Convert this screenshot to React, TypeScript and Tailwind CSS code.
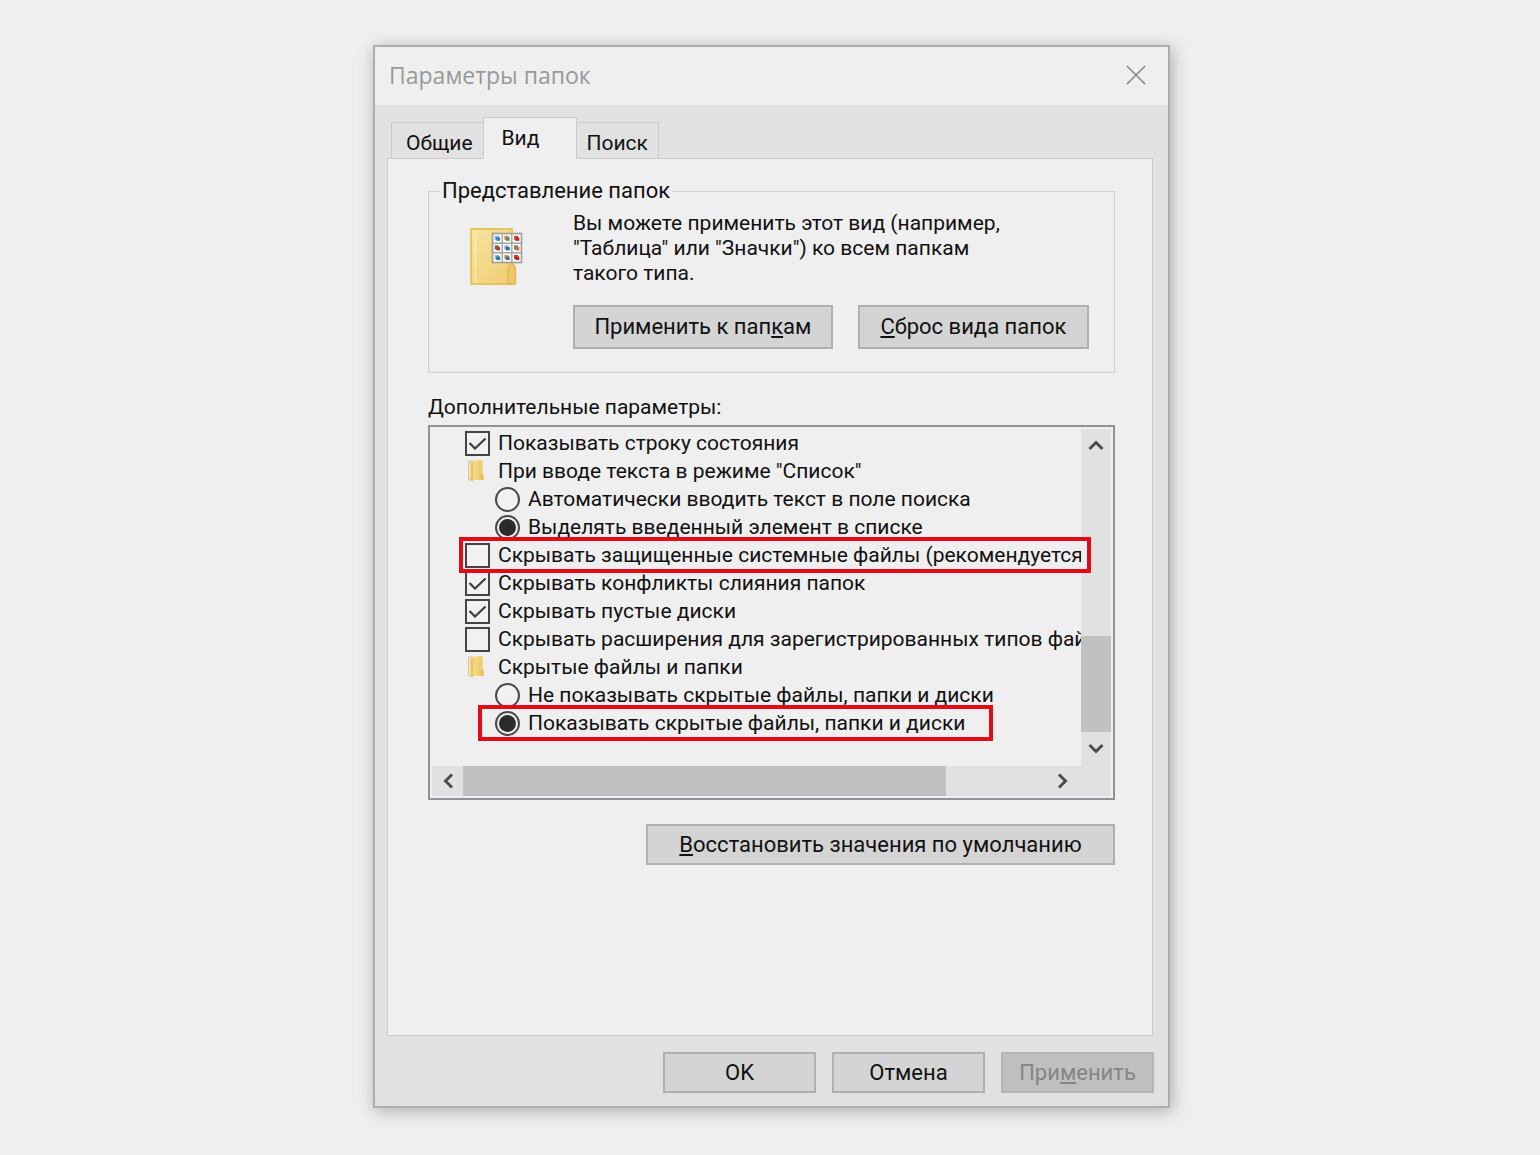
import { useState } from "react";
import type { ReactNode } from "react";

const buttonBase =
  "flex items-center justify-center whitespace-nowrap border-2 text-[22px] leading-6";
const buttonEnabled = "border-[#b0b0b0] bg-[#d4d4d4] text-[#111]";

function Check() {
  return (
    <svg viewBox="0 0 25 25" className="pointer-events-none size-[25px] [grid-area:1/1]" aria-hidden="true">
      <path d="M4.500 12 10 17.500 20.500 7.500" fill="none" stroke="#3f3f3f" strokeWidth="2.200" />
    </svg>
  );
}

function SmallFolder() {
  return (
    <svg viewBox="0 0 16 22" className="h-[22px] w-4" aria-hidden="true">
      <path d="M.5 1h4v19h-4z" fill="#f3e6bd" stroke="#d3c7a6" strokeWidth="1" />
      <path d="M4 .5h10.500V14l1 .5v5.500H4z" fill="#f4d682" />
      <path d="M10 .5h4.500V14l1 .5v5.500H10z" fill="#efcd72" />
      <path d="M2.500 1 5 3v19l-2.500-2z" fill="#e9c766" />
      <path d="M12.500 14h3v6h-3z" fill="#e6c160" />
    </svg>
  );
}

const cells = [
  ["#3d7fb5", "#6fb0dd"],
  ["#4e9a5c", "#e0803c"],
  ["#b3261a", "#d9542f"],
  ["#c0392b", "#3d7a46"],
  ["#2d6ea8", "#6fb0dd"],
  ["#d9683a", "#4e9a5c"],
  ["#2d6ea8", "#7fb7dc"],
  ["#3f6fb0", "#c8922c"],
  ["#b3261a", "#d33b22"],
];

function LargeFolder() {
  return (
    <svg viewBox="0 0 54 58" className="h-[58px] w-[54px]" aria-hidden="true">
      <defs>
        <linearGradient id="folder" x1="0" y1="0" x2="1" y2="1">
          <stop offset="0" stopColor="#f7e3a0" />
          <stop offset="1" stopColor="#efcd72" />
        </linearGradient>
      </defs>
      <path d="M1 1h41v55H1z" fill="url(#folder)" stroke="#e5c45f" strokeWidth="1.800" />
      <path d="M5.500 2v53" stroke="#fbeebd" strokeWidth="1" />
      <path d="M37 56h8" stroke="#e2b94a" strokeWidth="1.500" />
      <path d="M38 56V41q0-3 4-6 3.500 3 3.500 6v15z" fill="#edc867" stroke="#e2b94a" strokeWidth="1.300" />
      <rect x="22.500" y="5.500" width="29" height="29" fill="#fbfbfb" stroke="#9c9c9c" strokeWidth="1.600" />
      <path d="M32.200 5v30M41.800 5v30M22 15.200h30M22 24.800h30" stroke="#a3a3a3" strokeWidth="1.400" />
      {cells.map(([a, b], i) => {
        const x = 24.8 + (i % 3) * 9.6;
        const y = 7.8 + Math.floor(i / 3) * 9.6;
        return (
          <g key={i}>
            <rect x={x} y={y} width="4" height="4" fill={b} />
            <rect x={x + 1.5} y={y + 1.5} width="3.800" height="3.500" fill={a} />
          </g>
        );
      })}
    </svg>
  );
}

function Chevron({ className }: { className: string }) {
  return (
    <svg viewBox="0 0 16 12" className={className} aria-hidden="true">
      <path d="M1.500 10 8 3.500l6.500 6.500" fill="none" stroke="#4d4d4d" strokeWidth="3" />
    </svg>
  );
}

function Highlight({ className }: { className: string }) {
  return (
    <span
      className={`pointer-events-none absolute -top-1 -bottom-1 -z-10 border-4 border-[#e30b16] bg-[#efefef] ${className}`}
    />
  );
}

function CheckRow({ label, on, highlight }: { label: string; on?: boolean; highlight?: boolean }) {
  const [checked, setChecked] = useState(!!on);
  return (
    <div className={highlight ? "relative isolate z-10" : ""}>
      {highlight && <Highlight className="left-[29px] -right-[10px]" />}
      <label className="flex h-7 items-center gap-2 overflow-hidden pl-[35px]">
        <span className="grid shrink-0">
          <input
            type="checkbox"
            checked={checked}
            onChange={() => setChecked(!checked)}
            className="size-[25px] appearance-none border-2 border-[#444] bg-[#f1f1f1] [grid-area:1/1]"
          />
          {checked && <Check />}
        </span>
        <span className="whitespace-nowrap">{label}</span>
      </label>
    </div>
  );
}

function RadioRow({
  label,
  name,
  on,
  highlight,
}: {
  label: string;
  name: string;
  on?: boolean;
  highlight?: boolean;
}) {
  return (
    <div className={highlight ? "relative isolate z-10 w-fit" : ""}>
      {highlight && <Highlight className="left-12 -right-7" />}
      <label className="flex h-7 items-center gap-2 pl-[65px]">
        <span className="grid shrink-0 place-items-center">
          <input
            type="radio"
            name={name}
            defaultChecked={on}
            className="peer size-[25px] appearance-none rounded-full border-2 border-[#4a4a4a] bg-[#f1f1f1] [grid-area:1/1]"
          />
          <span className="pointer-events-none size-[17px] rounded-full [grid-area:1/1] peer-checked:bg-[#2b2b2b]" />
        </span>
        <span className="whitespace-nowrap">{label}</span>
      </label>
    </div>
  );
}

function FolderRow({ label }: { label: string }) {
  return (
    <div className="flex h-7 items-center gap-[14px] pl-[38px]">
      <SmallFolder />
      <span className="whitespace-nowrap">{label}</span>
    </div>
  );
}

function Tab({ children, active }: { children: ReactNode; active?: boolean }) {
  return (
    <button
      type="button"
      role="tab"
      aria-selected={!!active}
      className={
        active
          ? "relative -mx-px -mb-px flex h-[42px] w-[94px] items-start border border-b-0 border-[#cbcbcb] bg-[#efefef] pt-2 pl-[18px]"
          : "flex h-9 items-center border border-b-0 border-[#cbcbcb] bg-[#e1e1e1] pt-1 pr-2.5 pl-2.5 first:pr-2.5 first:pl-3.5"
      }
    >
      {children}
    </button>
  );
}

export default function App() {
  return (
    <main className="flex min-h-screen items-center justify-center bg-[#efefef] pb-0.5 pl-[3px] font-[Roboto,sans-serif] text-[21px] leading-6 text-[#111]">
      <section
        aria-label="Параметры папок"
        className="flex w-full max-w-[797px] flex-col border-2 border-[#adadad] bg-[#e1e1e1] shadow-[2px_3px_16px_rgba(0,0,0,0.28)]"
      >
        <header className="flex h-[58px] items-center justify-between bg-[#efefef] pr-5 pb-0.5 pl-3.5">
          <h1 className="font-['Open_Sans',sans-serif] text-[23px] leading-8 text-[#999]">Параметры папок</h1>
          <button type="button" aria-label="Закрыть" className="p-0.5">
            <svg viewBox="0 0 20 20" className="size-5" aria-hidden="true">
              <path d="m1 1 18 18M19 1 1 19" stroke="#858585" strokeWidth="1.500" />
            </svg>
          </button>
        </header>

        <div className="px-3 pt-3 pb-[13px]">
          <div role="tablist" className="flex items-end pl-1">
            <Tab>Общие</Tab>
            <Tab active>Вид</Tab>
            <Tab>Поиск</Tab>
          </div>

          <div
            role="tabpanel"
            className="mr-[3px] flex min-h-[878px] flex-col border border-[#cbcbcb] bg-[#efefef] pt-5 pr-[37px] pl-10"
          >
            <fieldset className="flex gap-[49px] border border-[#cfcfcf] pr-[25px] pb-[23px] pl-[41px]">
              <legend className="-ml-[30px] px-0.5 text-[22px]">Представление папок</legend>
              <div className="shrink-0 pt-[25px]">
                <LargeFolder />
              </div>
              <div className="min-w-0 flex-1 pt-2">
                <p className="max-w-[450px] leading-[25px]">
                  Вы можете применить этот вид (например,
                  <br />
                  "Таблица" или "Значки") ко всем папкам
                  <br />
                  такого типа.
                </p>
                <div className="flex gap-[25px] pt-[19px]">
                  <button type="button" className={`${buttonBase} ${buttonEnabled} h-11 flex-[260]`}>
                    <span>
                      Применить к пап<u>к</u>ам
                    </span>
                  </button>
                  <button type="button" className={`${buttonBase} ${buttonEnabled} h-11 flex-[231]`}>
                    <span>
                      <u>С</u>брос вида папок
                    </span>
                  </button>
                </div>
              </div>
            </fieldset>

            <h2 className="pt-[22px] pb-1.5">Дополнительные параметры:</h2>

            <div className="flex flex-col border-2 border-[#8e9299] pr-0.5 pb-0.5">
              <div className="flex">
                <div className="min-w-0 flex-1 pt-0.5 pb-[29px]">
                  <CheckRow label="Показывать строку состояния" on />
                  <FolderRow label={'При вводе текста в режиме "Список"'} />
                  <RadioRow name="typing" label="Автоматически вводить текст в поле поиска" />
                  <RadioRow name="typing" label="Выделять введенный элемент в списке" on />
                  <CheckRow label="Скрывать защищенные системные файлы (рекомендуется)" highlight />
                  <CheckRow label="Скрывать конфликты слияния папок" on />
                  <CheckRow label="Скрывать пустые диски" on />
                  <CheckRow label="Скрывать расширения для зарегистрированных типов файлов" />
                  <FolderRow label="Скрытые файлы и папки" />
                  <RadioRow name="hidden" label="Не показывать скрытые файлы, папки и диски" />
                  <RadioRow name="hidden" label="Показывать скрытые файлы, папки и диски" on highlight />
                </div>
                <div className="mt-0.5 flex w-[30px] flex-col items-center bg-[#e1e1e1]">
                  <button type="button" aria-label="Вверх" className="flex h-8 w-full items-center justify-center">
                    <Chevron className="h-3 w-4" />
                  </button>
                  <div className="mt-auto h-24 w-full bg-[#c1c1c1]" />
                  <button type="button" aria-label="Вниз" className="flex h-[34px] w-full items-center justify-center">
                    <Chevron className="h-3 w-4 rotate-180" />
                  </button>
                </div>
              </div>
              <div className="ml-0.5 flex h-[30px] items-center bg-[#e1e1e1] pr-[30px]">
                <button type="button" aria-label="Влево" className="flex h-full w-[31px] items-center justify-center">
                  <Chevron className="h-3 w-4 -rotate-90" />
                </button>
                <div className="flex h-full flex-1">
                  <div className="h-full w-[83%] bg-[#c1c1c1]" />
                </div>
                <button type="button" aria-label="Вправо" className="flex h-full w-9 items-center justify-center">
                  <Chevron className="h-3 w-4 rotate-90" />
                </button>
              </div>
            </div>

            <button
              type="button"
              className={`${buttonBase} ${buttonEnabled} mt-6 h-[41px] w-[469px] self-end`}
            >
              <span>
                <u>В</u>осстановить значения по умолчанию
              </span>
            </button>
          </div>

          <footer className="flex justify-end gap-4 pt-4 pr-0.5">
            <button type="button" className={`${buttonBase} ${buttonEnabled} h-[41px] w-[153px]`}>
              OK
            </button>
            <button type="button" className={`${buttonBase} ${buttonEnabled} h-[41px] w-[153px]`}>
              Отмена
            </button>
            <button
              type="button"
              disabled
              className={`${buttonBase} h-[41px] w-[153px] border-[#b5b5b5] bg-[#bfbfbf] text-[#858585]`}
            >
              <span>
                При<u>м</u>енить
              </span>
            </button>
          </footer>
        </div>
      </section>
    </main>
  );
}
